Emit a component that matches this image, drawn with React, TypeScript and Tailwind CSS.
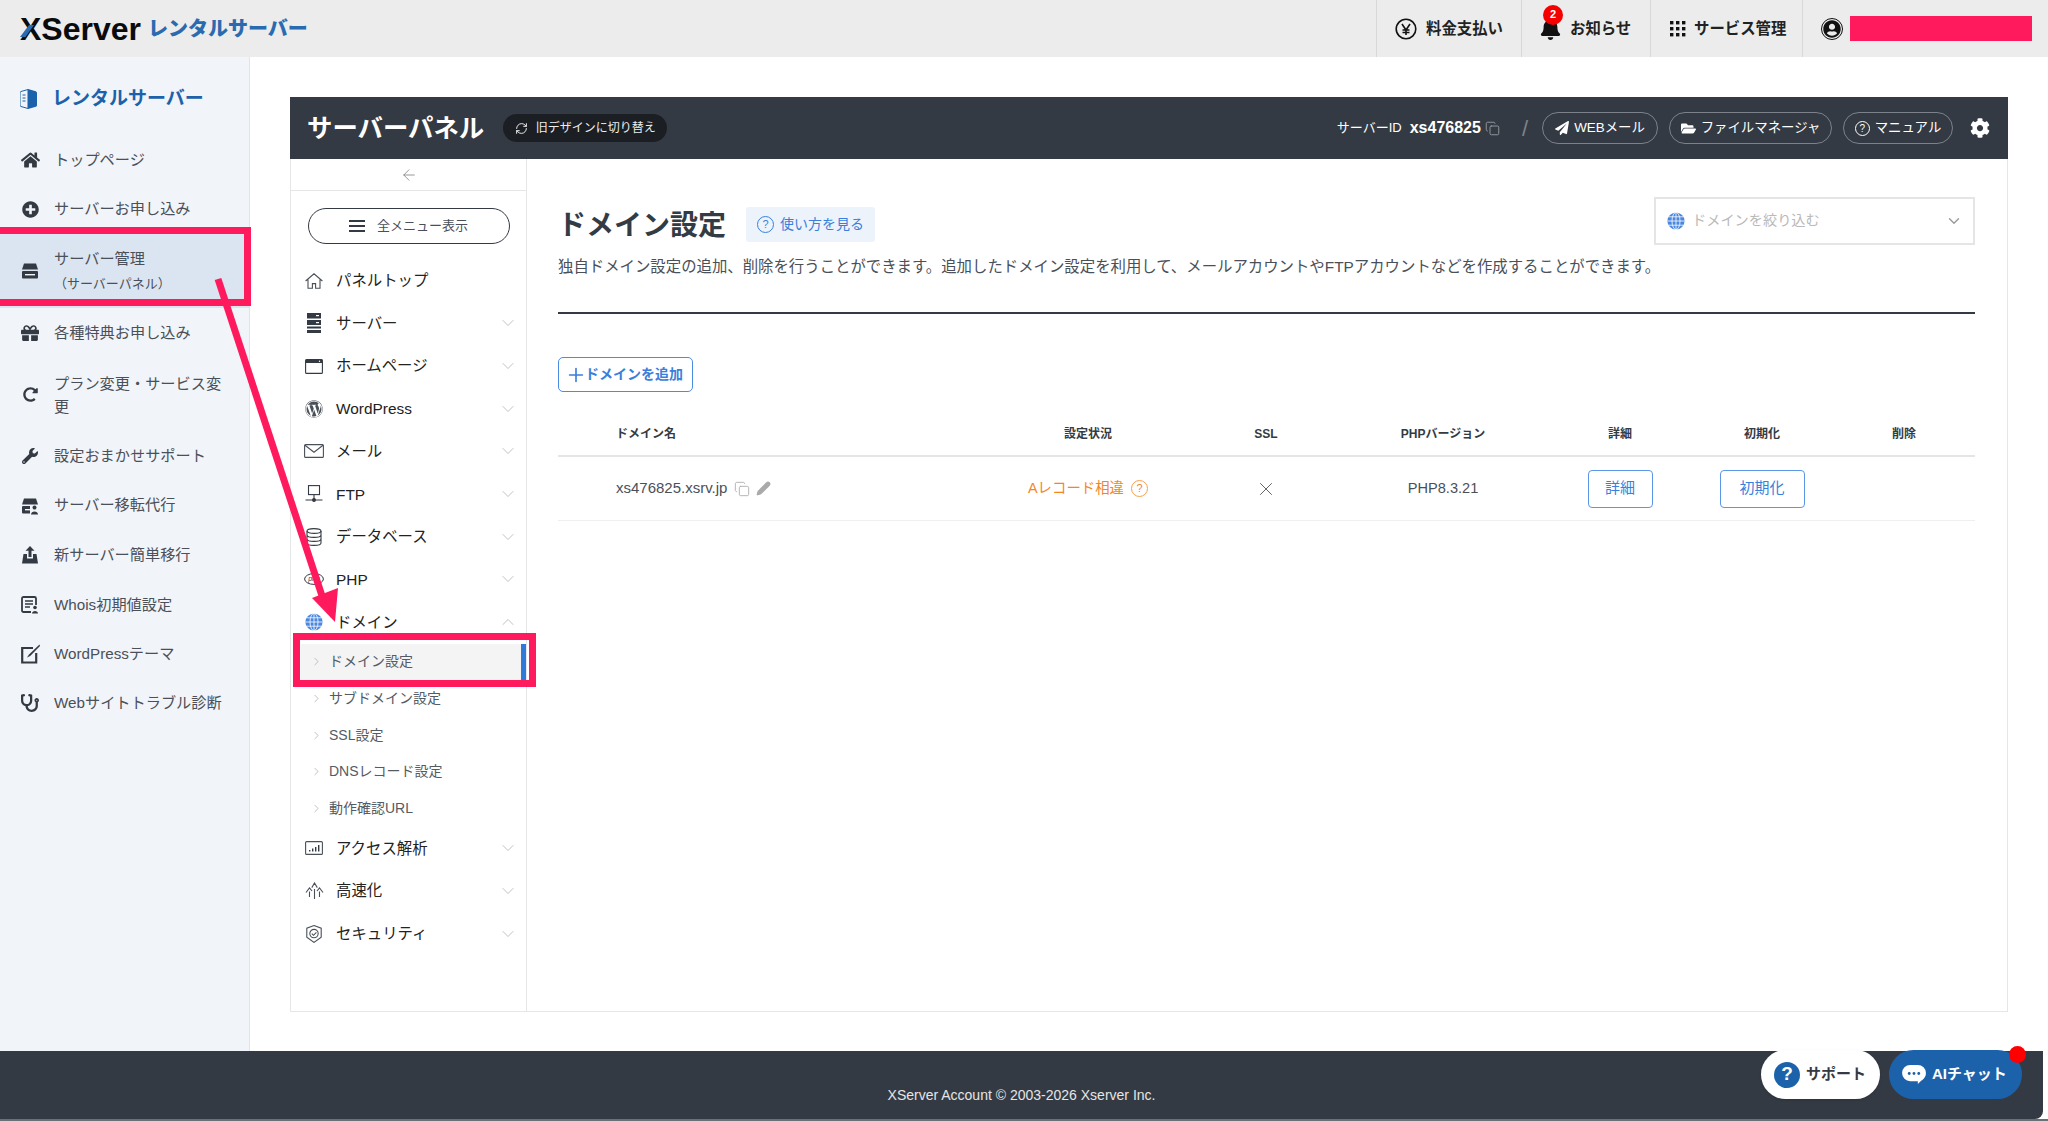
import type { ReactNode } from "react"
import {
  FaCog,
  FaFolderOpen,
  FaGift,
  FaHome,
  FaPaperPlane,
  FaPlusCircle,
  FaRedoAlt,
  FaStethoscope,
  FaUserCircle,
  FaWordpress,
  FaWrench,
  FaBell,
} from "react-icons/fa"
import { ChevronDown, ChevronRight, ChevronUp, ArrowLeft, Copy, Pencil, X, RefreshCw, Plus } from "lucide-react"

const FONT = { fontFamily: '"Liberation Sans", "Noto Sans CJK JP", sans-serif' }

function DriveIcon({ user }: { user?: boolean }) {
  return (
    <svg viewBox="0 0 18 18" className="h-[18px] w-[18px]" fill="#343a43">
      <path d="M3 1.5h12l2 6H1z" />
      <rect x="1" y="9" width="16" height="7.5" rx="1" />
      <rect x="4" y="12" width="10" height="1.4" fill="#f1f4f8" />
      {user && (
        <g>
          <rect x="9" y="8.5" width="9" height="9" fill="#f1f4f8" />
          <circle cx="13.5" cy="10.5" r="2" />
          <path d="M10 17.5c0-4 7-4 7 0z" />
        </g>
      )}
    </svg>
  )
}

function TrayUpIcon() {
  return (
    <svg viewBox="0 0 18 18" className="h-[18px] w-[18px]" fill="#343a43">
      <path d="M9 0l4.5 4.8h-3V11h-3V4.8h-3z" />
      <path d="M2.5 8H6v4.5h6V8h3.5L17 17.5H1z" />
    </svg>
  )
}

function WhoisIcon() {
  return (
    <svg viewBox="0 0 18 18" className="h-[18px] w-[18px]">
      <rect x="1" y="1" width="14" height="15" rx="1.5" fill="none" stroke="#343a43" strokeWidth="1.8" />
      <path d="M4 5h8M4 8h8M4 11h5" stroke="#343a43" strokeWidth="1.4" />
      <rect x="10" y="9" width="8" height="9" fill="#f1f4f8" />
      <circle cx="14" cy="11.5" r="1.8" fill="#343a43" />
      <path d="M11 17.5c0-3.4 6-3.4 6 0z" fill="#343a43" />
    </svg>
  )
}

function ThemeIcon() {
  return (
    <svg viewBox="0 0 20 20" className="h-[20px] w-[20px]">
      <path d="M13 4H2.2v14.5h14V9" fill="none" stroke="#343a43" strokeWidth="2.2" />
      <path d="M19.5 0.5L9 10.5l-2 3 3.2-1.6L20 2z" fill="#343a43" />
    </svg>
  )
}

function RackIcon() {
  return (
    <svg viewBox="0 0 14 20" className="h-[20px] w-[14px]" fill="#343a43">
      <rect x="0" y="0" width="14" height="5.5" />
      <rect x="0" y="7" width="14" height="5" />
      <rect x="0" y="13.5" width="14" height="2" />
      <rect x="0" y="17" width="14" height="3" />
      <rect x="9" y="2" width="3" height="1.2" fill="#fff" />
      <rect x="9" y="9" width="3" height="1.2" fill="#fff" />
    </svg>
  )
}

function WindowIcon() {
  return (
    <svg viewBox="0 0 18 15" className="h-[15px] w-[18px]">
      <rect x="0.6" y="0.6" width="16.8" height="13.8" rx="1" fill="#fff" stroke="#343a43" strokeWidth="1.1" />
      <rect x="0.6" y="0.6" width="16.8" height="3.4" fill="#343a43" />
      <circle cx="14.5" cy="2.3" r="0.7" fill="#fff" />
    </svg>
  )
}

function MailIcon() {
  return (
    <svg viewBox="0 0 20 14" className="h-[14px] w-[20px]" fill="none" stroke="#4a5059" strokeWidth="1.1">
      <rect x="0.6" y="0.6" width="18.8" height="12.8" rx="1" />
      <path d="M1 1.2l9 7 9-7" />
    </svg>
  )
}

function FtpIcon() {
  return (
    <svg viewBox="0 0 18 18" className="h-[18px] w-[18px]" fill="none" stroke="#343a43" strokeWidth="1.1">
      <rect x="3.5" y="0.6" width="11" height="9" />
      <path d="M9 9.6v5M0.5 15h17" />
      <circle cx="9" cy="15" r="1.4" fill="#343a43" />
    </svg>
  )
}

function DatabaseIcon() {
  return (
    <svg viewBox="0 0 16 18" className="h-[18px] w-[16px]" fill="none" stroke="#343a43" strokeWidth="1.1">
      <ellipse cx="8" cy="3" rx="7" ry="2.4" />
      <path d="M1 3v12c0 1.4 3 2.4 7 2.4s7-1 7-2.4V3M1 7c0 1.4 3 2.4 7 2.4S15 8.400 15 7M1 11c0 1.400 3 2.400 7 2.400s7-1 7-2.400" />
    </svg>
  )
}

function PhpIcon() {
  return (
    <svg viewBox="0 0 20 12" className="h-[12px] w-[20px]">
      <ellipse cx="10" cy="6" rx="9.4" ry="5.4" fill="none" stroke="#343a43" strokeWidth="1" />
      <text x="10" y="8.400" textAnchor="middle" fontSize="7" fontStyle="italic" fill="#343a43" fontFamily="Liberation Sans">
        php
      </text>
    </svg>
  )
}

function GlobeIcon({ size = 18 }: { size?: number }) {
  return (
    <svg viewBox="0 0 18 18" width={size} height={size} className="shrink-0">
      <circle cx="9" cy="9" r="8.600" fill="#4a88e0" />
      <g fill="none" stroke="#fff" strokeWidth="0.8">
        <ellipse cx="9" cy="9" rx="4" ry="8.600" />
        <path d="M9 0.400v17.200M0.400 9h17.200M1.600 4.800h14.800M1.600 13.200h14.800" />
      </g>
    </svg>
  )
}

function HomeOutlineIcon() {
  return (
    <svg viewBox="0 0 18 16" className="h-[16px] w-[18px]" fill="none" stroke="#4a5059" strokeWidth="1.1">
      <path d="M0.600 8L9 0.800 17.400 8M3 6.200V15.200h4.400v-4.600h3.200v4.600H15V6.200" />
    </svg>
  )
}

function StatsIcon() {
  return (
    <svg viewBox="0 0 18 14" className="h-[14px] w-[18px]">
      <rect x="0.600" y="0.600" width="16.800" height="12.800" rx="1" fill="none" stroke="#4a5059" strokeWidth="1.1" />
      <path d="M4 9h1.400v1.600H4zM7 7.400h1.400v3.200H7zM10 6h1.400v4.600H10zM13 4h1.400v6.600H13z" fill="#343a43" />
    </svg>
  )
}

function SpeedIcon() {
  return (
    <svg viewBox="0 0 19 18" className="h-[18px] w-[19px]" fill="none" stroke="#4a5059" strokeWidth="1.1">
      <path d="M9.500 17V7M6.800 5.600L9.500 1 12.300 5.600M4.500 15V9.500M1 10.500L4.500 5.800 7 9M14.500 15V9.500M12 9l2.500-3.200L18 10.500" />
    </svg>
  )
}

function ShieldIcon() {
  return (
    <svg viewBox="0 0 16 18" className="h-[18px] w-[16px]" fill="none" stroke="#4a5059" strokeWidth="1.1">
      <path d="M8 0.600l7.200 2.600v9L8 17.400 0.800 12.200v-9z" />
      <circle cx="8" cy="8.600" r="4.200" />
      <path d="M5.800 8.600l1.700 1.700 2.900-3" />
    </svg>
  )
}

function YenIcon() {
  return (
    <svg viewBox="0 0 22 22" className="h-[22px] w-[22px]" fill="none" stroke="#111" strokeWidth="1.6">
      <circle cx="11" cy="11" r="9.800" />
      <path d="M7 6l4 6 4-6M11 12v5M7.500 12h7M7.500 14.500h7" />
    </svg>
  )
}

function GridIcon() {
  return (
    <svg viewBox="0 0 16 16" className="h-[16px] w-[16px]" fill="#111">
      {[0, 6, 12].map((y) =>
        [0, 6, 12].map((x) => <rect key={`${x}-${y}`} x={x} y={y} width="3.400" height="3.400" />),
      )}
    </svg>
  )
}

const sideItems: { icon: ReactNode; label: ReactNode; h: string; active?: boolean }[] = [
  { icon: <FaHome className="h-[18px] w-[19px] text-[#343a43]" />, label: "トップページ", h: "h-[50px]" },
  { icon: <FaPlusCircle className="h-[17px] w-[17px] text-[#343a43]" />, label: "サーバーお申し込み", h: "h-[49px]" },
  {
    icon: <DriveIcon />,
    label: (
      <>
        <span className="block leading-[25px]">サーバー管理</span>
        <span className="block text-[13px] leading-[25px]">（サーバーパネル）</span>
      </>
    ),
    h: "h-[74px]",
    active: true,
  },
  { icon: <FaGift className="h-[18px] w-[18px] text-[#343a43]" />, label: "各種特典お申し込み", h: "h-[50px]" },
  {
    icon: <FaRedoAlt className="h-[15px] w-[15px] text-[#343a43]" />,
    label: <span className="block leading-[23px]">プラン変更・サービス変更</span>,
    h: "h-[73px]",
  },
  { icon: <FaWrench className="h-[16px] w-[16px] text-[#343a43]" />, label: "設定おまかせサポート", h: "h-[50px]" },
  { icon: <DriveIcon user />, label: "サーバー移転代行", h: "h-[49px]" },
  { icon: <TrayUpIcon />, label: "新サーバー簡単移行", h: "h-[50px]" },
  { icon: <WhoisIcon />, label: "Whois初期値設定", h: "h-[50px]" },
  { icon: <ThemeIcon />, label: "WordPressテーマ", h: "h-[48px]" },
  { icon: <FaStethoscope className="h-[18px] w-[18px] text-[#343a43]" />, label: "Webサイトトラブル診断", h: "h-[50px]" },
]

const navTop: { icon: ReactNode; label: string }[] = [
  { icon: <RackIcon />, label: "サーバー" },
  { icon: <WindowIcon />, label: "ホームページ" },
  { icon: <FaWordpress className="h-[18px] w-[18px] text-[#4a5059]" />, label: "WordPress" },
  { icon: <MailIcon />, label: "メール" },
  { icon: <FtpIcon />, label: "FTP" },
  { icon: <DatabaseIcon />, label: "データベース" },
  { icon: <PhpIcon />, label: "PHP" },
]

const navSub = ["ドメイン設定", "サブドメイン設定", "SSL設定", "DNSレコード設定", "動作確認URL"]

const navBottom: { icon: ReactNode; label: string }[] = [
  { icon: <StatsIcon />, label: "アクセス解析" },
  { icon: <SpeedIcon />, label: "高速化" },
  { icon: <ShieldIcon />, label: "セキュリティ" },
]

function NavRow({ icon, label, open }: { icon: ReactNode; label: string; open?: boolean }) {
  return (
    <div className="flex h-[42.7px] items-center pl-[11px] pr-[8px]">
      <span className="flex w-[24px] shrink-0 justify-center">{icon}</span>
      <span className="ml-[10px] flex-1 text-[15.4px] text-[#222]">{label}</span>
      {open ? (
        <ChevronUp className="h-[20px] w-[20px] text-[#b4b4b4]" strokeWidth={1} />
      ) : (
        <ChevronDown className="h-[20px] w-[20px] text-[#b4b4b4]" strokeWidth={1} />
      )}
    </div>
  )
}

function PillLink({ icon, label, w }: { icon: ReactNode; label: string; w: string }) {
  return (
    <div className={`flex h-[32px] items-center justify-center gap-[5px] rounded-full border border-[#7d828a] text-[13.4px] text-white ${w}`}>
      {icon}
      {label}
    </div>
  )
}

export default function App() {
  return (
    <div style={FONT} className="relative flex h-[1121px] w-[2048px] flex-col overflow-hidden bg-white text-[#333b44]">
      {/* header */}
      <header className="flex h-[57px] shrink-0 items-center justify-between bg-[#ececec]">
        <div className="relative flex items-center pl-[20px]">
          <span className="text-[32px] font-bold leading-none text-[#0b0b0b]">XServer</span>
          <svg viewBox="0 0 18 12" className="absolute left-[20px] top-[12px] h-[12px] w-[18px]">
            <path d="M0 12L9 0h5L5.500 12z" fill="#2a6bb0" />
          </svg>
          <span className="ml-[7px] text-[20px] font-extrabold text-[#2a6bb0]">レンタルサーバー</span>
        </div>
        <div className="flex h-full items-center text-[15.4px] font-bold text-[#222]">
          <div className="flex h-full w-[145px] items-center gap-[9px] border-l border-[#d8d8d8] pl-[18px]">
            <YenIcon />
            料金支払い
          </div>
          <div className="flex h-full w-[129px] items-center border-l border-[#d8d8d8] pl-[18px]">
            <span className="relative mr-[9px] flex">
              <FaBell className="h-[22px] w-[21px] text-[#111]" />
              <span className="absolute left-[3px] top-[-13px] flex h-[20px] w-[20px] items-center justify-center rounded-full bg-[#f50000] text-[11px] font-bold text-white">
                2
              </span>
            </span>
            お知らせ
          </div>
          <div className="flex h-full w-[152px] items-center gap-[8px] border-l border-[#d8d8d8] pl-[19px]">
            <GridIcon />
            サービス管理
          </div>
          <div className="flex h-full w-[246px] items-center border-l border-[#d8d8d8] pl-[18px]">
            <span className="flex h-[22px] w-[22px] items-center justify-center rounded-full border-[1.5px] border-[#111]">
              <FaUserCircle className="h-[18px] w-[18px] text-[#111]" />
            </span>
            <div className="ml-[7px] h-[25px] w-[182px] bg-[#ff1a5e]" />
          </div>
        </div>
      </header>

      <div className="flex min-h-0 flex-1">
        {/* account sidebar */}
        <aside className="w-[250px] shrink-0 border-r border-[#e1e5eb] bg-[#f1f4f8]">
          <div className="flex h-[78px] items-center gap-[15px] pl-[20px] pt-[6px]">
            <svg viewBox="0 0 17 20" className="h-[20px] w-[17px]">
              <path d="M8 0.500L1 2.500c-.6.2-1 .6-1 1.200v12.600c0 .6.4 1 1 1.200l7 2z" fill="none" stroke="#1c62ab" strokeWidth="1" />
              <path d="M8 0l7 2c1 .3 2 .8 2 1.800v12.400c0 1-1 1.500-2 1.800l-7 2z" fill="#1c62ab" />
              <path d="M2.500 6h3M2.500 9h3M2.500 12h3" stroke="#1c62ab" strokeWidth="1" />
            </svg>
            <span className="text-[19px] font-bold text-[#1c62ab]">レンタルサーバー</span>
          </div>
          {sideItems.map((item, i) => (
            <div key={i} className={`flex items-center pr-[20px] ${item.h} ${item.active ? "bg-[#dae5f1]" : ""}`}>
              <span className="flex w-[54px] shrink-0 justify-center pl-[10px] pr-[4px]">{item.icon}</span>
              <span className="min-w-0 flex-1 text-[15.2px] text-[#4a5059]">{item.label}</span>
            </div>
          ))}
        </aside>

        {/* server panel */}
        <main className="min-w-0 flex-1 pb-[39px] pl-[40px] pr-[40px] pt-[40px]">
          <div className="flex h-full flex-col border-x border-b border-[#e6e6e6]">
            <div className="-mx-px flex h-[62px] shrink-0 items-center bg-[#343a43] pl-[17px] text-white">
              <span className="text-[25.4px] font-bold">サーバーパネル</span>
              <span className="ml-[19px] flex h-[28px] w-[164px] items-center justify-center gap-[8px] rounded-full bg-[#1b1e23] text-[12px] text-[#eee]">
                <RefreshCw className="h-[13px] w-[13px]" strokeWidth={1.8} />
                旧デザインに切り替え
              </span>
              <div className="ml-auto flex items-center pr-[18px]">
                <span className="text-[13px]">サーバーID</span>
                <span className="ml-[8px] text-[16px] font-bold">xs476825</span>
                <Copy className="ml-[4px] h-[15px] w-[15px] text-[#9ba0a7]" strokeWidth={1.4} />
                <span className="ml-[22px] text-[22px] font-light text-[#7d828a]">/</span>
                <div className="ml-[14px] flex gap-[11px]">
                  <PillLink icon={<FaPaperPlane className="h-[14px] w-[14px]" />} label="WEBメール" w="w-[116px]" />
                  <PillLink icon={<FaFolderOpen className="h-[15px] w-[15px]" />} label="ファイルマネージャ" w="w-[163px]" />
                  <PillLink
                    icon={
                      <span className="flex h-[15px] w-[15px] items-center justify-center rounded-full border border-white text-[10px]">?</span>
                    }
                    label="マニュアル"
                    w="w-[110px]"
                  />
                </div>
                <FaCog className="ml-[17px] h-[20px] w-[20px]" />
              </div>
            </div>

            <div className="flex min-h-0 flex-1">
              {/* panel nav */}
              <nav className="w-[236px] shrink-0 border-r border-[#e6e6e6]">
                <div className="flex h-[32px] items-center justify-center border-b border-[#e6e6e6]">
                  <ArrowLeft className="h-[18px] w-[18px] text-[#777]" strokeWidth={1} />
                </div>
                <div className="flex justify-center pt-[17px]">
                  <div className="flex h-[36px] w-[202px] items-center justify-center gap-[12px] rounded-full border-[1.5px] border-[#343a43] text-[13px] text-[#4a5059]">
                    <span className="flex w-[16px] flex-col gap-[3px]">
                      <span className="h-[2px] bg-[#343a43]" />
                      <span className="h-[2px] bg-[#343a43]" />
                      <span className="h-[2px] bg-[#343a43]" />
                    </span>
                    全メニュー表示
                  </div>
                </div>
                <div className="mt-[15px] flex h-[43px] items-center pl-[11px]">
                  <span className="flex w-[24px] shrink-0 justify-center">
                    <HomeOutlineIcon />
                  </span>
                  <span className="ml-[10px] text-[15.4px] text-[#222]">パネルトップ</span>
                </div>
                {navTop.map((n) => (
                  <NavRow key={n.label} icon={n.icon} label={n.label} />
                ))}
                <NavRow icon={<GlobeIcon />} label="ドメイン" open />
                <div>
                  {navSub.map((s, i) => (
                    <div key={s} className="flex h-[36.7px] items-center pl-[10px]">
                      <div className={`flex h-[36px] flex-1 items-center pl-[9px] ${i === 0 ? "border-r-[5px] border-[#2f7ad9] bg-[#f4f4f4]" : ""}`}>
                        <ChevronRight className="h-[13px] w-[13px] text-[#a0a0a0]" strokeWidth={1.2} />
                        <span className="ml-[6px] text-[14px] text-[#555b63]">{s}</span>
                      </div>
                    </div>
                  ))}
                </div>
                {navBottom.map((n) => (
                  <NavRow key={n.label} icon={n.icon} label={n.label} />
                ))}
              </nav>

              {/* domain settings */}
              <section className="min-w-0 flex-1 pl-[31px] pr-[32px] pt-[38px]">
                <div className="flex items-start">
                  <h1 className="text-[28px] font-bold leading-[58px] text-[#333b44]">ドメイン設定</h1>
                  <div className="ml-[20px] mt-[10px] flex h-[35px] w-[129px] items-center justify-center gap-[6px] rounded-[3px] bg-[#edf3fa] text-[14px] text-[#3a7fdb]">
                    <span className="flex h-[17px] w-[17px] items-center justify-center rounded-full border-[1.5px] border-[#3a7fdb] text-[11px]">?</span>
                    使い方を見る
                  </div>
                  <div className="ml-auto flex h-[48px] w-[321px] items-center border-2 border-[#e5e5e5] pl-[11px] pr-[10px] text-[14.2px] text-[#b9b9b9]">
                    <GlobeIcon />
                    <span className="ml-[7px] flex-1">ドメインを絞り込む</span>
                    <ChevronDown className="h-[18px] w-[18px] text-[#999]" strokeWidth={1.8} />
                  </div>
                </div>
                <p className="text-[15.4px] leading-[24px] text-[#4a5059]">
                  独自ドメイン設定の追加、削除を行うことができます。追加したドメイン設定を利用して、メールアカウントやFTPアカウントなどを作成することができます。
                </p>
                <div className="mt-[33px] h-[2px] bg-[#343a43]" />

                <div className="mt-[43px] flex h-[35px] w-[135px] items-center justify-center rounded-[5px] border-[1.5px] border-[#4a8ce2] text-[14px] font-bold text-[#3a7fdb]">
                  <Plus className="-mr-[2px] -ml-[3px] h-[22px] w-[22px]" strokeWidth={1.8} />
                  ドメインを追加
                </div>

                <div className="mt-[25px] grid h-[40px] grid-cols-[423px_214px_142px_212px_142px_142px_142px] items-center border-b-2 border-[#e5e5e5] pb-[5px] text-center text-[12px] font-bold text-[#333b44]">
                  <div className="pl-[58px] text-left">ドメイン名</div>
                  <div>設定状況</div>
                  <div>SSL</div>
                  <div>PHPバージョン</div>
                  <div>詳細</div>
                  <div>初期化</div>
                  <div>削除</div>
                </div>
                <div className="grid h-[64px] grid-cols-[423px_214px_142px_212px_142px_142px_142px] items-center border-b border-[#efefef] text-center text-[15px] text-[#4a5059]">
                  <div className="flex items-center pl-[58px]">
                    xs476825.xsrv.jp
                    <Copy className="ml-[7px] h-[16px] w-[16px] text-[#aaa]" strokeWidth={1.3} />
                    <Pencil className="ml-[6px] h-[15px] w-[15px] fill-[#aaa] text-[#aaa]" />
                  </div>
                  <div className="flex items-center justify-center gap-[7px] text-[14.4px] text-[#f5861f]">
                    Aレコード相違
                    <span className="flex h-[17px] w-[17px] items-center justify-center rounded-full border border-[#f5a050] text-[11px]">?</span>
                  </div>
                  <div className="flex justify-center">
                    <X className="h-[22px] w-[22px] text-[#555]" strokeWidth={1} />
                  </div>
                  <div className="text-[14.6px]">PHP8.3.21</div>
                  <div className="flex justify-center">
                    <div className="flex h-[38px] w-[65px] items-center justify-center rounded-[4px] border-[1.5px] border-[#5a97e6] text-[#3a7fdb]">詳細</div>
                  </div>
                  <div className="flex justify-center">
                    <div className="flex h-[38px] w-[85px] items-center justify-center rounded-[4px] border-[1.5px] border-[#5a97e6] text-[#3a7fdb]">初期化</div>
                  </div>
                  <div />
                </div>
              </section>
            </div>
          </div>
        </main>
      </div>

      {/* footer */}
      <footer className="mr-[5px] flex h-[68px] shrink-0 items-center justify-center rounded-br-[8px] bg-[#343a43] pt-[20px] text-[14px] text-[#e5e5e5]">
        XServer Account © 2003-2026 Xserver Inc.
      </footer>
      <div className="h-[2px] shrink-0 bg-[#6b7078]" />

      {/* floating support buttons */}
      <div className="absolute left-[1761px] top-[1050px] flex h-[49px] w-[119px] items-center rounded-full bg-white pl-[13px] shadow-sm">
        <span className="flex h-[26px] w-[26px] items-center justify-center rounded-full bg-[#1c62ab] text-[19px] font-bold text-white">?</span>
        <span className="ml-[6px] text-[15px] font-bold text-[#343a43]">サポート</span>
      </div>
      <div className="absolute left-[1889px] top-[1050px] flex h-[49px] w-[133px] items-center rounded-full bg-[#1c62ab] pl-[12px]">
        <svg viewBox="0 0 26 22" className="h-[21px] w-[26px]">
          <path d="M9 1h8a8.500 8.500 0 0 1 8.500 8.500c0 4-2.500 6.800-5 8l-3.500 3.500v-3H9A8.500 8.500 0 0 1 9 1z" fill="#fff" />
          <circle cx="8" cy="10" r="1.500" fill="#1c62ab" />
          <circle cx="13" cy="10" r="1.500" fill="#1c62ab" />
          <circle cx="18" cy="10" r="1.500" fill="#1c62ab" />
        </svg>
        <span className="ml-[5px] text-[15px] font-bold text-white">AIチャット</span>
      </div>
      <div className="absolute left-[2009px] top-[1046px] h-[17px] w-[17px] rounded-full bg-[#ff0000]" />

      {/* annotation overlay */}
      <div className="pointer-events-none absolute left-[-8px] top-[227px] h-[79px] w-[259px] border-[7px] border-[#ff1a5e]" />
      <div className="pointer-events-none absolute left-[293px] top-[633px] h-[54px] w-[243px] border-[7px] border-[#ff1a5e]" />
      <svg className="pointer-events-none absolute left-[200px] top-[260px] h-[380px] w-[160px]" viewBox="0 0 160 380">
        <path d="M18 19L125 345" stroke="#ff1a5e" strokeWidth="7" fill="none" />
        <path d="M135 362L112 338 138 328z" fill="#ff1a5e" />
      </svg>
    </div>
  )
}
